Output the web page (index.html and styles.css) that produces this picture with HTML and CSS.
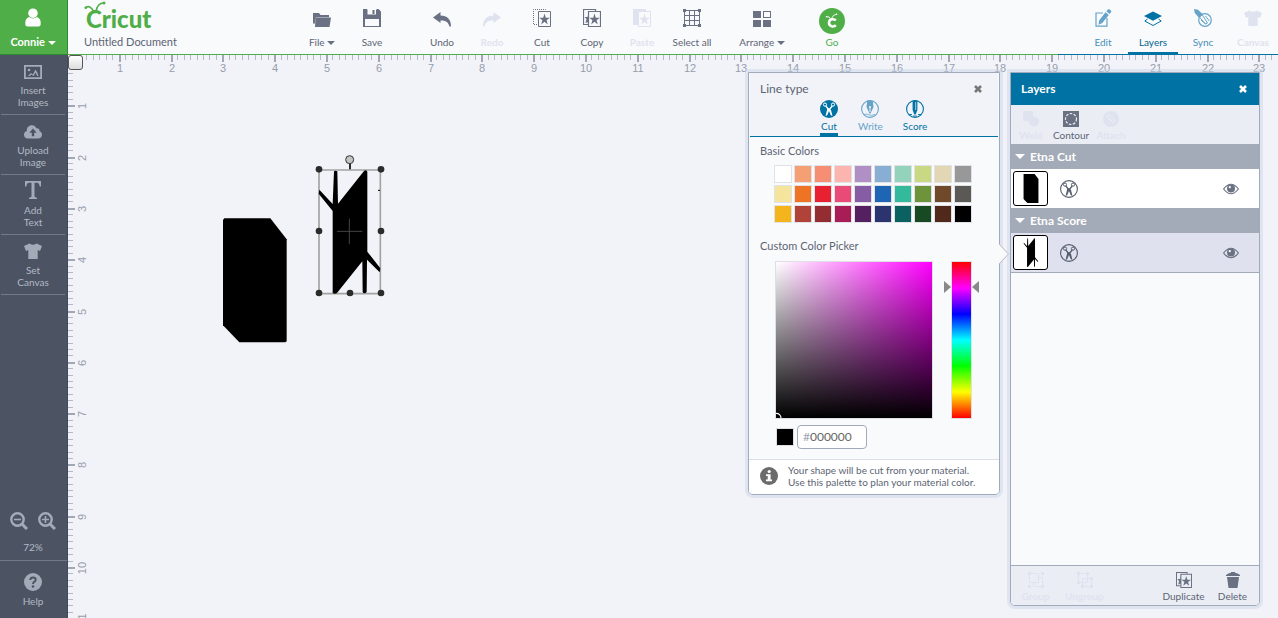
FILE: index.html
```html
<!DOCTYPE html>
<html lang="en">
<head>
<meta charset="utf-8">
<meta name="viewport" content="width=device-width, initial-scale=1">
<title>Cricut - Untitled Document</title>
<link rel="stylesheet" href="styles.css">
</head>
<body>
<svg class="sprite" aria-hidden="true">
  <symbol id="i-user" viewBox="0 0 18 20"><circle cx="9" cy="5.500" r="5"/><path d="M1 18q-1-7 4-8.500q4 3 8 0q5 1.500 4 8.500q-.3 1.500-2 1.500h-12q-1.700 0-2-1.500z"/></symbol>
  <symbol id="i-file" viewBox="0 0 18 18"><path d="M0 4h6l1.500 2H16v2H3L1.500 15H1L0 14z"/><path d="M3 6.500h13v2H3z" opacity=".45"/><path d="M2.500 8.500H18L16.500 18H2z"/></symbol>
  <symbol id="i-save" viewBox="0 0 18 18"><path fill-rule="evenodd" d="M0 0h15.500L18 2.500V18H0zM4 0v6h10V0zM2 10v7h14v-7z"/><path d="M9.500 1h2v4h-2zM3 .5h1.500v5H13V.5h1v6H3z"/></symbol>
  <symbol id="i-undo" viewBox="0 0 18 18"><path d="M0 8.500L7.500 3v3.500C14 6.500 18 10 18 17.500h-1.500C15.500 13 12 11 7.500 11.500V14z"/></symbol>
  <symbol id="i-redo" viewBox="0 0 18 18"><path d="M18 8.500L10.500 3v3.500C4 6.500 0 10 0 17.500h1.500C2.500 13 6 11 10.500 11.500V14z"/></symbol>
  <symbol id="i-cut" viewBox="0 0 18 18"><path d="M4 15.500H.5V.5h12V2" fill="none" stroke="currentColor" stroke-dasharray="1 1"/><path d="M5.500 2.500h12v15h-12z" fill="none" stroke="currentColor"/><path d="M11.500 4.500l1.300 4.200h4l-3.200 2.500 1.200 4.200-3.300-2.600L8.200 15.400l1.200-4.200-3.200-2.500h4z"/></symbol>
  <symbol id="i-copy" viewBox="0 0 18 18"><path d="M5 15.500H.5V.5h12V2" fill="none" stroke="currentColor" stroke-width="1.200"/><path d="M5.500 5v8L2.500 14l1-4L1.500 8h3z"/><path d="M5.500 2.500h12v15h-12z" fill="none" stroke="currentColor" stroke-width="1.200"/><path d="M11.500 4.500l1.300 4.200h4l-3.200 2.500 1.200 4.200-3.300-2.600L8.200 15.400l1.200-4.200-3.200-2.500h4z"/></symbol>
  <symbol id="i-paste" viewBox="0 0 18 18"><path d="M0 0h13v2H5v14H0z"/><path d="M5.500 2.500h12v15h-12z" fill="none" stroke="currentColor"/><path d="M11.500 4.500l1.300 4.200h4l-3.200 2.500 1.200 4.200-3.300-2.600L8.200 15.400l1.200-4.200-3.200-2.500h4z"/></symbol>
  <symbol id="i-grid" viewBox="0 0 18 18"><path d="M1.500 1.500h15v15h-15zM6.500 1v16M11.500 1v16M1 6.500h16M1 11.500h16" fill="none" stroke="currentColor"/><path d="M0 0h3v3H0zM15 0h3v3h-3zM0 15h3v3H0zM15 15h3v3h-3z"/></symbol>
  <symbol id="i-arrange" viewBox="0 0 18 18"><path fill-rule="evenodd" d="M0 2h8v7H0zM0 11h8v7H0zM10 11h8v7h-8zM10 2h8v7h-8zM11 3v5h6V3z"/></symbol>
  <symbol id="i-go" viewBox="0 0 26 26"><circle cx="13" cy="13" r="13"/><path d="M16.800 12.500c-1.800-2.200-6.800-1.600-6.800 2.300s4.800 4.600 6.800 2.300" fill="none" stroke="#fff" stroke-width="2.600"/><path d="M11.500 11Q10.500 8 7.500 8.700M12.500 10.500Q14 6.500 17.500 6.200" fill="none" stroke="#fff" stroke-width=".9"/><circle cx="7.500" cy="8.800" r=".8" fill="#fff"/><circle cx="17.600" cy="6.200" r=".8" fill="#fff"/></symbol>
  <symbol id="i-edit" viewBox="0 0 18 18"><path d="M9 4H2v13.200h11V9" fill="none" stroke="currentColor" stroke-width="1.200"/><path d="M11.500 3.300l3.300 2.700-6.500 8-3.800 1.800.6-4.300zM12.300 2.300L14 .4q.6-.6 1.200-.1l1.800 1.500q.6.500.1 1.200l-1.500 1.900z"/></symbol>
  <symbol id="i-layers" viewBox="0 0 18 18"><path d="M9 2.500l9 4.600-9 4.600-9-4.600z"/><path d="M3.500 10L.8 12 9 16.500l8.200-4.500-2.700-2" fill="none" stroke="currentColor"/></symbol>
  <symbol id="i-sync" viewBox="0 0 18 18"><circle cx="11" cy="11" r="6.300" fill="none" stroke="currentColor" stroke-width="1.200"/><path d="M0 0l4 .8 4.500 4.200-3.500 3.700L.8 4z"/><path d="M8 5.500l5.500 8.500-2 1L5.500 8zM11.500 7l3.800 5M7 11l4.500 4" fill="none" stroke="currentColor"/></symbol>
  <symbol id="i-shirt" viewBox="0 0 18 16"><path d="M5.500.5Q9 3 12.500.5L18 3l-2 5-2.300-1V16H4.300V7L2 8 0 3z"/></symbol>
  <symbol id="i-image" viewBox="0 0 18 14"><path d="M.9.900h16.200v12.200H.9z" fill="none" stroke="currentColor" stroke-width="1.800"/><circle cx="5" cy="5" r="1.300"/><path d="M4 11l3-3 2 1.500L11.500 4.500 13.500 8 14.500 11h-1.300L11.500 7.500 9.700 11l-2.500-1.500L6 11z"/></symbol>
  <symbol id="i-cloud" viewBox="0 0 18 14"><path fill-rule="evenodd" d="M4 13.500C1.500 13.500 0 11.800 0 9.700S1.300 6.500 2.800 6C2.500 2.500 5 .3 7.800.3c2.200 0 3.800 1.200 4.500 3 2-.4 3.500 1 3.200 3 1.500.5 2.500 1.700 2.500 3.400 0 2.200-1.700 3.800-4 3.800zM9 3.500L5.300 7.700h2.500v3.600h2.400V7.700h2.500z"/></symbol>
  <symbol id="i-text" viewBox="0 0 16 18"><path d="M0 0h16v5.500h-1.300Q14.300 2 12 1.700H9.500v13.500q0 1.300 2.500 1.500V18H4v-1.300q2.500-.2 2.500-1.500V1.700H4Q1.700 2 1.300 5.500H0z"/></symbol>
  <symbol id="i-minus" viewBox="0 0 18 18"><circle cx="7.500" cy="7.500" r="6.200" fill="none" stroke="currentColor" stroke-width="2.400"/><path d="M12 12l5 5" stroke="currentColor" stroke-width="3"/><path d="M4 6.700h7v1.600H4z"/></symbol>
  <symbol id="i-plus" viewBox="0 0 18 18"><circle cx="7.500" cy="7.500" r="6.200" fill="none" stroke="currentColor" stroke-width="2.400"/><path d="M12 12l5 5" stroke="currentColor" stroke-width="3"/><path d="M4 6.700h7v1.600H4zM6.700 4h1.600v7H6.700z"/></symbol>
  <symbol id="i-help" viewBox="0 0 18 18"><circle cx="9" cy="9" r="9"/><path d="M6.300 7Q6.300 4.500 9 4.500T11.700 6.800Q11.700 8.300 10 9 9 9.600 9 11" fill="none" stroke="#4c5464" stroke-width="2"/><circle cx="9" cy="13.500" r="1.300" fill="#4c5464"/></symbol>
  <symbol id="i-scissors" viewBox="0 0 18 18"><circle cx="5" cy="4.600" r="1.600" fill="none" stroke="currentColor"/><circle cx="13" cy="4.600" r="1.600" fill="none" stroke="currentColor"/><path d="M5.800 6L9 10l3.200-4" fill="none" stroke="currentColor" stroke-width="1.300"/><path d="M7.300 8.500L9 8l2 2 1.500 6-1.700-.8L9 11 7.200 15.200 5.500 16 7 10z"/></symbol>
  <symbol id="i-ring" viewBox="0 0 18 18"><circle cx="9" cy="9" r="8.400" fill="none" stroke="currentColor" stroke-width="1.100"/></symbol>
  <symbol id="i-pen" viewBox="0 0 18 18"><path fill-rule="evenodd" d="M6.300.6h5.400L12.500 7l-3 6.500h-1L5.500 7zM9 6a1 1 0 0 0-.5 1.900V12h1V7.900A1 1 0 0 0 9 6z"/><path d="M3 14.500q3-1 5 .3t6-.3" fill="none" stroke="currentColor" stroke-width=".8"/></symbol>
  <symbol id="i-stylus" viewBox="0 0 18 18"><path d="M6.600.5h4.800V10L9.700 14.500H8.300L6.600 10z"/><path d="M3 14.500h3M7 16h4M12 14.500h3" stroke="currentColor" stroke-width=".9"/><path d="M9.700 2v8" stroke="#f2f3f8" stroke-width=".7"/></symbol>
  <symbol id="i-close" viewBox="0 0 8 8"><path d="M1 1l6 6M7 1L1 7" stroke="currentColor" stroke-width="2.600"/></symbol>
  <symbol id="i-info" viewBox="0 0 18 18"><circle cx="9" cy="9" r="9"/><path d="M6 7.300h4.600v5.200H12V14.300H6v-1.800h1.700V9H6z" fill="#fff"/><circle cx="9.200" cy="4.500" r="1.600" fill="#fff"/></symbol>
  <symbol id="i-weld" viewBox="0 0 16 16"><path d="M0 0h10v5.500h1A5 5 0 1 1 6 10.500V10H0z"/></symbol>
  <symbol id="i-contour" viewBox="0 0 16 16"><path d="M0 0h16v16H0z"/><circle cx="8" cy="8" r="5.500" fill="none" stroke="#ebedf5" stroke-width="1.200" stroke-dasharray="2.500 1.500"/></symbol>
  <symbol id="i-attach" viewBox="0 0 16 16"><circle cx="8" cy="8" r="8"/><path d="M5 5.500l5 5.500q2 .8 2-1.200L7.500 4.500q-2.500-1.800-3.500.5 0 1 1.500 2.500L9 11.500" fill="none" stroke="#ebedf5" stroke-width=".9"/></symbol>
  <symbol id="i-eye" viewBox="0 0 16 12"><path d="M.6 6Q8-3.500 15.400 6 8 15.500.6 6z" fill="none" stroke="currentColor" stroke-width="1.200"/><circle cx="8" cy="5.500" r="4"/><circle cx="6.800" cy="4.200" r="1.100" fill="#fff"/></symbol>
  <symbol id="i-group" viewBox="0 0 16 16"><path d="M1.500 1.500h9v9h-9zM11 5.500h3.500v9h-9V11" fill="none" stroke="currentColor"/><path d="M0 0h3v3H0zM13 0h3v3h-3zM0 13h3v3H0zM13 13h3v3h-3z"/></symbol>
  <symbol id="i-ungroup" viewBox="0 0 16 16"><path d="M1.500 1.500h9v9h-9zM5.500 6.500h9v8h-9z" fill="none" stroke="currentColor"/><path d="M0 0h3v3H0zM9 0h3v3H9zM0 9h3v3H0zM4 13h3v3H4zM13 13h3v3h-3zM13 5h3v3h-3z"/></symbol>
  <symbol id="i-trash" viewBox="0 0 14 16"><path d="M0 3q2-2 5-2.200V0h4v.8Q12 1 14 3v1H0zM1 5h12l-1.500 11h-9z"/></symbol>
  <symbol id="i-shape-cut" viewBox="69 235 191 372"><path d="M73 235H211L260 298V604L256 607H118L69 556V240z"/></symbol>
  <symbol id="i-shape-score" viewBox="356 88 188 374"><path d="M402 94q5-4 10 0l2 97L492 93q7-6 10 2V335l41 52-5 10-36-38-1 97q-6 7-12 1l-1-93-76 95q-6 5-13 0V213l-43-52 2-12 40 41z"/></symbol>
</svg>

<header class="header">
  <button class="account" type="button"><svg class="account-icon"><use href="#i-user"/></svg><span>Connie <i class="caret"></i></span></button>
  <div class="brand">
    <div class="logo">Cricut<svg class="antennae" viewBox="0 0 24 12"><path d="M10 11Q6 3 1 7M12 11Q13 2 20 2" fill="none" stroke="currentColor" stroke-width="1.600"/><circle cx="1.800" cy="6.800" r="1.300"/><circle cx="20" cy="2" r="1.500"/></svg></div>
    <div class="doc-name">Untitled Document</div>
  </div>
  <nav class="tools" aria-label="Document">
    <div class="tool-group">
      <button class="tool" type="button"><svg><use href="#i-file"/></svg><span>File <i class="caret"></i></span></button>
      <button class="tool" type="button"><svg><use href="#i-save"/></svg><span>Save</span></button>
    </div>
    <div class="tool-group">
      <button class="tool" type="button"><svg><use href="#i-undo"/></svg><span>Undo</span></button>
      <button class="tool" type="button" disabled><svg><use href="#i-redo"/></svg><span>Redo</span></button>
      <button class="tool" type="button"><svg><use href="#i-cut"/></svg><span>Cut</span></button>
      <button class="tool" type="button"><svg><use href="#i-copy"/></svg><span>Copy</span></button>
      <button class="tool" type="button" disabled><svg><use href="#i-paste"/></svg><span>Paste</span></button>
      <button class="tool" type="button"><svg><use href="#i-grid"/></svg><span>Select all</span></button>
    </div>
    <div class="tool-group">
      <button class="tool" type="button"><svg><use href="#i-arrange"/></svg><span>Arrange <i class="caret"></i></span></button>
    </div>
    <div class="tool-group">
      <button class="tool go" type="button"><svg><use href="#i-go"/></svg><span>Go</span></button>
    </div>
  </nav>
  <nav class="panels-nav" aria-label="Panels">
    <button class="tool" type="button"><svg><use href="#i-edit"/></svg><span>Edit</span></button>
    <button class="tool active" type="button"><svg><use href="#i-layers"/></svg><span>Layers</span></button>
    <button class="tool" type="button"><svg><use href="#i-sync"/></svg><span>Sync</span></button>
    <button class="tool" type="button" disabled><svg><use href="#i-shirt"/></svg><span>Canvas</span></button>
  </nav>
</header>

<div class="main">
  <aside class="sidebar">
    <button class="side-item" type="button"><svg class="h14"><use href="#i-image"/></svg><span>Insert<br>Images</span></button>
    <button class="side-item" type="button"><svg class="h14"><use href="#i-cloud"/></svg><span>Upload<br>Image</span></button>
    <button class="side-item" type="button"><svg class="h18"><use href="#i-text"/></svg><span>Add<br>Text</span></button>
    <button class="side-item" type="button"><svg class="h16"><use href="#i-shirt"/></svg><span>Set<br>Canvas</span></button>
    <div class="zoom">
      <div class="zoom-buttons">
        <button type="button" aria-label="Zoom out"><svg><use href="#i-minus"/></svg></button>
        <button type="button" aria-label="Zoom in"><svg><use href="#i-plus"/></svg></button>
      </div>
      <span>72%</span>
    </div>
    <button class="help" type="button"><svg><use href="#i-help"/></svg><span>Help</span></button>
  </aside>

  <main class="workspace">
    <svg class="canvas" aria-label="Canvas">
      <g id="ruler-x"></g>
      <g id="ruler-y"></g>
      <svg class="artwork" x="132" y="85" width="200" height="220" viewBox="0 0 600 660">
        <path d="M73 235H211L260 298V604L256 607H118L69 556V240z"/>
        <path d="M357 90H541V461H357z" fill="none" stroke="#a3a3a3" stroke-width="5"/>
        <path d="M402 94q5-4 10 0l2 97L492 93q7-6 10 2V335l39 50-2 12-38-38-1 97q-6 7-12 1l-1-93-76 95q-6 5-13 0V213l-42-52 2-12 40 43z"/>
        <path d="M411 274h76M448 236v76" stroke="#444" stroke-width="3"/>
        <path d="M450 88V66" stroke="#000" stroke-width="5"/>
        <circle cx="449" cy="59" r="12" fill="#c4c4c4" stroke="#333" stroke-width="3"/>
        <path d="M534 151h6" stroke="#000" stroke-width="3"/>
        <g fill="#2b2b2b"><circle cx="357" cy="88" r="10"/><circle cx="543" cy="88" r="10"/><circle cx="357" cy="273" r="10"/><circle cx="543" cy="273" r="10"/><circle cx="357" cy="459" r="10"/><circle cx="450" cy="459" r="10"/><circle cx="543" cy="459" r="10"/></g>
      </svg>
    </svg>
    <div class="ruler-corner"></div>

    <section class="panel line-panel" aria-label="Line type">
      <div class="line-head">
        <div class="line-title"><h2>Line type</h2><button class="close" type="button" aria-label="Close"><svg><use href="#i-close"/></svg></button></div>
        <div class="line-tabs">
          <button class="line-tab selected" type="button"><svg class="disc"><use href="#i-scissors"/></svg><span>Cut</span></button>
          <button class="line-tab muted" type="button"><svg><use href="#i-ring"/><use href="#i-pen"/></svg><span>Write</span></button>
          <button class="line-tab" type="button"><svg><use href="#i-ring"/><use href="#i-stylus"/></svg><span>Score</span></button>
        </div>
      </div>
      <div class="line-body">
        <h3>Basic Colors</h3>
        <div class="swatches" id="swatches"></div>
        <h3>Custom Color Picker</h3>
        <div class="picker">
          <div class="shade"><svg class="shade-mark" viewBox="0 0 6 6"><path d="M0 1.500A4.500 4.500 0 0 1 5 6" fill="none" stroke="#fff" stroke-width="1.200"/></svg></div>
          <div class="hue"><i class="hue-left"></i><i class="hue-right"></i></div>
        </div>
        <div class="hex">
          <span class="hex-chip"></span>
          <label class="hex-field"><span>#</span><input type="text" value="000000" aria-label="Hex color"></label>
        </div>
      </div>
      <div class="line-foot"><svg><use href="#i-info"/></svg><p>Your shape will be cut from your material.<br>Use this palette to plan your material color.</p></div>
      <svg class="pointer" viewBox="0 0 11 20"><path d="M0 0h1l9.500 10L1 20H0z" fill="#f9fafc"/><path d="M1 0l9.500 10L1 20" fill="none" stroke="#b4b9c4"/></svg>
    </section>

    <section class="panel layers-panel" aria-label="Layers">
      <div class="layers-head"><h2>Layers</h2><button class="close" type="button" aria-label="Close"><svg><use href="#i-close"/></svg></button></div>
      <div class="layers-tools">
        <button class="mini" type="button" disabled><svg><use href="#i-weld"/></svg><span>Weld</span></button>
        <button class="mini" type="button"><svg><use href="#i-contour"/></svg><span>Contour</span></button>
        <button class="mini" type="button" disabled><svg><use href="#i-attach"/></svg><span>Attach</span></button>
      </div>
      <div class="layers-list">
        <button class="layer-group" type="button"><i class="caret big"></i>Etna Cut</button>
        <div class="layer">
          <span class="thumb"><svg><use href="#i-shape-cut"/></svg></span>
          <svg class="layer-type"><use href="#i-ring"/><use href="#i-scissors"/></svg>
          <button class="eye" type="button" aria-label="Hide layer"><svg><use href="#i-eye"/></svg></button>
        </div>
        <button class="layer-group" type="button"><i class="caret big"></i>Etna Score</button>
        <div class="layer current">
          <span class="thumb"><svg><use href="#i-shape-score"/></svg></span>
          <svg class="layer-type"><use href="#i-ring"/><use href="#i-scissors"/></svg>
          <button class="eye" type="button" aria-label="Hide layer"><svg><use href="#i-eye"/></svg></button>
        </div>
      </div>
      <div class="layers-foot">
        <button class="mini wide" type="button" disabled><svg><use href="#i-group"/></svg><span>Group</span></button>
        <button class="mini wide" type="button" disabled><svg><use href="#i-ungroup"/></svg><span>Ungroup</span></button>
        <button class="mini wide push" type="button"><svg><use href="#i-copy"/></svg><span>Duplicate</span></button>
        <button class="mini wide" type="button"><svg><use href="#i-trash"/></svg><span>Delete</span></button>
      </div>
    </section>
  </main>
</div>
<script src="app.js"></script>
</body>
</html>
```

FILE: styles.css
```css
* { box-sizing: border-box; }

body {
  margin: 0;
  height: 100vh;
  display: flex;
  flex-direction: column;
  overflow: hidden;
  background: #f2f3f8;
  color: #5c6473;
  font: 11px/14px Lato, "Liberation Sans", sans-serif;
}

button {
  border: 0;
  padding: 0;
  background: none;
  color: inherit;
  font: inherit;
  cursor: pointer;
}

svg { display: block; fill: currentColor; }
h2, h3, p { margin: 0; font-weight: 400; }
.sprite { display: none; }

.caret {
  display: inline-block;
  vertical-align: middle;
  border: 4px solid transparent;
  border-top-color: currentColor;
  border-bottom: 0;
}

.caret.big { border-width: 5px 5px 0; }

/* Header */
.header {
  flex: none;
  display: flex;
  height: 55px;
  background: #f9fafc;
}

.account {
  width: 68px;
  padding: 8px 1px 0 0;
  display: flex;
  flex-direction: column;
  align-items: center;
  gap: 8px;
  background: #4fae47;
  border-right: 1px solid #2d8a30;
  border-bottom: 1px solid #2d8a30;
  color: #fff;
  font-weight: 700;
}

.account-icon { width: 18px; height: 19px; }

.brand {
  flex: 0 0 229px;
  padding: 7px 0 0 16px;
  border-bottom: 1px solid #4fae47;
}

.logo {
  position: relative;
  height: 28px;
  padding-left: 2px;
  color: #4fae47;
  font-size: 24px;
  line-height: 24px;
  font-weight: 900;
}

.antennae { position: absolute; left: 0; top: -6px; width: 24px; height: 12px; }

.tools {
  flex: 1;
  display: flex;
  gap: 20px;
  border-bottom: 1px solid #4fae47;
}

.tool-group { display: flex; }

.tool {
  width: 50px;
  padding-top: 9px;
  display: flex;
  flex-direction: column;
  align-items: center;
  justify-content: flex-start;
  gap: 8px;
  white-space: nowrap;
  font-size: 10px;
}

.tool svg { width: 18px; height: 18px; color: #6a7182; }
.tool .caret { color: #6a7182; }
.tool:disabled, .tool:disabled svg { color: #dfe3ef; }
.tool:disabled { font-weight: 700; }
.tool.go { padding-top: 8px; gap: 1px; color: #4fae47; }
.tool.go svg { width: 26px; height: 26px; color: #4fae47; }

.panels-nav {
  display: flex;
  padding-left: 20px;
  border-bottom: 1px solid #0072a3;
  color: #4790ba;
}

.panels-nav .tool svg { color: #65a3c8; }
.panels-nav .tool:disabled svg { color: #dfe3ef; }
.panels-nav .active { color: #00628f; border-bottom: 2px solid #0072a3; }
.panels-nav .active svg { color: #0072a3; }

/* Sidebar */
.main { flex: 1; min-height: 0; display: flex; }

.sidebar {
  width: 68px;
  display: flex;
  flex-direction: column;
  background: #4c5464;
  border-right: 1px solid #434a59;
  color: #b3b9c5;
  font-size: 10px;
  line-height: 12px;
}

.sidebar svg { color: #a4abb8; }

.side-item {
  height: 60px;
  margin: 0 2px 0 1px;
  padding-bottom: 6px;
  display: flex;
  flex-direction: column;
  align-items: center;
  justify-content: flex-end;
  gap: 5px;
  border-bottom: 1px solid #727a8a;
}

.side-item svg { width: 18px; }
.h14 { height: 14px; }
.h16 { height: 16px; }
.h18 { height: 18px; }

.zoom {
  margin-top: auto;
  padding: 0 1px 7px 0;
  text-align: center;
}

.zoom-buttons { display: flex; justify-content: center; gap: 10px; padding-bottom: 11px; }
.zoom-buttons svg { width: 18px; height: 18px; }

.help {
  height: 58px;
  padding: 12px 1px 0 0;
  display: flex;
  flex-direction: column;
  align-items: center;
  justify-content: flex-start;
  gap: 4px;
  border-top: 1px solid #727a8a;
}

.help svg { width: 18px; height: 18px; }

/* Workspace */
.workspace { position: relative; flex: 1; min-width: 0; }
.canvas { width: 100%; height: 100%; }
.artwork { fill: #000; }
.tick { fill: #b3b9c6; }
.tick-major { fill: #a0a8b8; }
.ruler-label { fill: #969dac; font: 11px "Liberation Sans", sans-serif; text-anchor: middle; }

.ruler-corner {
  position: absolute;
  left: 0;
  top: 0;
  width: 15px;
  height: 15px;
  border: 1px solid #555;
  border-radius: 3px;
  background: linear-gradient(#fff, #ddd);
}

/* Floating panels */
.panel {
  position: absolute;
  top: 17px;
  display: flex;
  flex-direction: column;
  background: #f9fafc;
  border: 1px solid #a0aabb;
  border-radius: 0 0 5px 5px;
  box-shadow: 0 0 0 3px rgba(200, 212, 230, 0.45);
}

.panel h2 { font-size: 12px; line-height: 14px; }
.panel h3 { font-size: 11px; line-height: 14px; }
.close svg { width: 8px; height: 8px; }

.line-panel { right: 278px; width: 252px; }

.line-head {
  height: 64px;
  margin: 0 1px;
  background: #f2f3f8;
  border-bottom: 1px solid #0072a3;
}

.line-title {
  display: flex;
  justify-content: space-between;
  padding: 9px 16px 0 10px;
}

.line-title .close { color: #777; }

.line-tabs {
  display: flex;
  gap: 20px;
  padding: 4px 0 0 70px;
  color: #0072a3;
  font-size: 10px;
  line-height: 12px;
}

.line-tab {
  display: flex;
  flex-direction: column;
  align-items: center;
  gap: 2px;
  padding-bottom: 1px;
}

.line-tab svg { width: 18px; height: 18px; }
.line-tab .disc { background: #0072a3; color: #fff; border-radius: 50%; }
.line-tab.muted { color: #65a3c8; }
.line-tab.selected { border-bottom: 3px solid #0072a3; }

.line-body { padding: 7px 11px 10px; }

.swatches {
  display: grid;
  grid-template-columns: repeat(10, 18px);
  gap: 2px;
  padding: 7px 14px 16px;
}

.swatch { height: 18px; border: 1px solid #e0e2e6; }

.picker { display: flex; gap: 18px; padding: 8px 15px 0; }

.shade {
  width: 158px;
  height: 158px;
  display: flex;
  align-items: flex-end;
  border: 1px solid #dedfe2;
  background: linear-gradient(transparent, #000) padding-box, linear-gradient(90deg, #fff, #f0f) padding-box;
}

.shade-mark { width: 6px; height: 6px; }

.hue {
  position: relative;
  width: 21px;
  border: 1px solid #dedfe2;
  background: linear-gradient(#f00, #f0f, #00f, #0ff, #0f0, #ff0, #f00) padding-box;
}

.hue-left, .hue-right { position: absolute; top: 19px; border: 6px solid transparent; }
.hue-left { right: 20px; border-left: 7px solid #888; border-right: 0; }
.hue-right { left: 20px; border-right: 7px solid #888; border-left: 0; }

.hex { display: flex; align-items: center; gap: 3px; padding: 6px 16px 0; }
.hex-chip { width: 18px; height: 18px; border: 1px solid #dedfe2; background: #000; }

.hex-field {
  width: 70px;
  height: 24px;
  display: flex;
  align-items: center;
  padding-left: 5px;
  border: 1px solid #a0aabb;
  border-radius: 4px;
  background: #fff;
  color: #a0a6b4;
  font-size: 12px;
}

.hex-field input {
  width: 100%;
  min-width: 0;
  padding: 0;
  border: 0;
  outline: 0;
  background: none;
  color: #666;
  font: inherit;
}

.line-foot {
  display: flex;
  align-items: center;
  gap: 10px;
  height: 35px;
  padding: 0 11px 2px;
  background: #fff;
  border-top: 1px solid #d9dfec;
  border-radius: 0 0 4px 4px;
  color: #6b6b6b;
  font-size: 10px;
  line-height: 12px;
}

.line-foot svg { width: 18px; height: 18px; }
.line-foot p { white-space: nowrap; color: #5c6473; }
.line-panel .pointer { position: absolute; left: 249px; top: 171px; width: 11px; height: 20px; }

/* Layers */
.layers-panel { right: 18px; bottom: 12px; width: 250px; }

.layers-head {
  display: flex;
  align-items: center;
  justify-content: space-between;
  height: 32px;
  padding: 0 12px 0 10px;
  background: #0072a3;
  color: #fff;
}

.panel .layers-head h2 { font-weight: 700; }

.layers-tools {
  display: flex;
  height: 39px;
  background: #ebedf5;
}

.mini {
  width: 40px;
  padding-top: 6px;
  display: flex;
  flex-direction: column;
  align-items: center;
  justify-content: flex-start;
  gap: 1px;
  font-size: 10px;
}

.mini svg { width: 16px; height: 16px; color: #6a7182; }
.mini:disabled, .mini:disabled svg { color: #dfe3ef; }
.mini:disabled { font-weight: 700; }
.mini.wide { width: 49px; padding-top: 6px; }
.mini.push { margin-left: auto; }

.layers-list { flex: 1; }

.layer-group {
  width: 100%;
  height: 25px;
  display: flex;
  align-items: center;
  gap: 5px;
  padding-left: 4px;
  background: #a4abb8;
  color: #fff;
  font-size: 12px;
  font-weight: 700;
}

.layer {
  display: flex;
  align-items: center;
  height: 39px;
  padding: 0 20px 0 2px;
  background: #fff;
}

.layer.current { height: 40px; background: #dfe2ee; border-bottom: 1px solid #a4abb8; }

.thumb {
  width: 35px;
  height: 35px;
  display: flex;
  align-items: center;
  justify-content: center;
  margin-right: 12px;
  border: 1px solid #000;
  border-radius: 3px;
  background: #fff;
  color: #000;
}

.thumb svg { width: 16px; height: 29px; }
.layer-type { width: 18px; height: 18px; color: #555d6c; }
.eye { margin-left: auto; }
.eye svg { width: 16px; height: 12px; color: #6a7182; }

.layers-foot {
  display: flex;
  height: 40px;
  padding-right: 2px;
  background: #ebedf5;
  border-top: 1px solid #a0aabb;
  border-radius: 0 0 4px 4px;
}
```

FILE: app.js
```javascript
const SVG_NS = 'http://www.w3.org/2000/svg';
const DIVISIONS = 8;

function addTo(parent, name, attributes, text) {
  const node = document.createElementNS(SVG_NS, name);
  for (const key in attributes) node.setAttribute(key, attributes[key]);
  if (text) node.textContent = text;
  parent.appendChild(node);
}

// Draws one ruler: a long numbered tick per inch, short ticks between.
function drawRuler(id, inch, count, vertical) {
  const ruler = document.getElementById(id);
  for (let i = 2; i < (count + 1) * DIVISIONS; i++) {
    const at = Math.round(i * inch / DIVISIONS);
    const major = i % DIVISIONS === 0;
    const thick = major ? 2 : 1;
    const long = major ? 7 : 5;
    addTo(ruler, 'rect', {
      class: major ? 'tick-major' : 'tick',
      x: vertical ? 0 : at - 1,
      y: vertical ? at - 1 : 0,
      width: vertical ? long : thick,
      height: vertical ? thick : long
    });
    if (major) {
      const place = vertical ? `translate(18 ${at}) rotate(-90)` : `translate(${at} 17)`;
      addTo(ruler, 'text', { class: 'ruler-label', transform: place }, String(i / DIVISIONS));
    }
  }
}

drawRuler('ruler-x', 51.8, 23, false);
drawRuler('ruler-y', 51.3, 11, true);

const COLORS = [
  '#ffffff', '#f4a074', '#f58e72', '#fbb5ae', '#b08fc4', '#89aed4', '#93d2bb', '#c8d883', '#e2d6b4', '#989898',
  '#f5e49c', '#ee7325', '#e7212f', '#e94a77', '#865ca5', '#1e65b3', '#33ba9c', '#6d943a', '#70482a', '#5a5955',
  '#f4b41c', '#b0423a', '#932d31', '#a81d56', '#54205f', '#2b346e', '#0b615f', '#174a22', '#51291b', '#000000'
];

for (const color of COLORS) {
  const swatch = document.createElement('button');
  swatch.type = 'button';
  swatch.className = 'swatch';
  swatch.setAttribute('aria-label', color);
  swatch.style.backgroundColor = color;
  document.getElementById('swatches').appendChild(swatch);
}
```
